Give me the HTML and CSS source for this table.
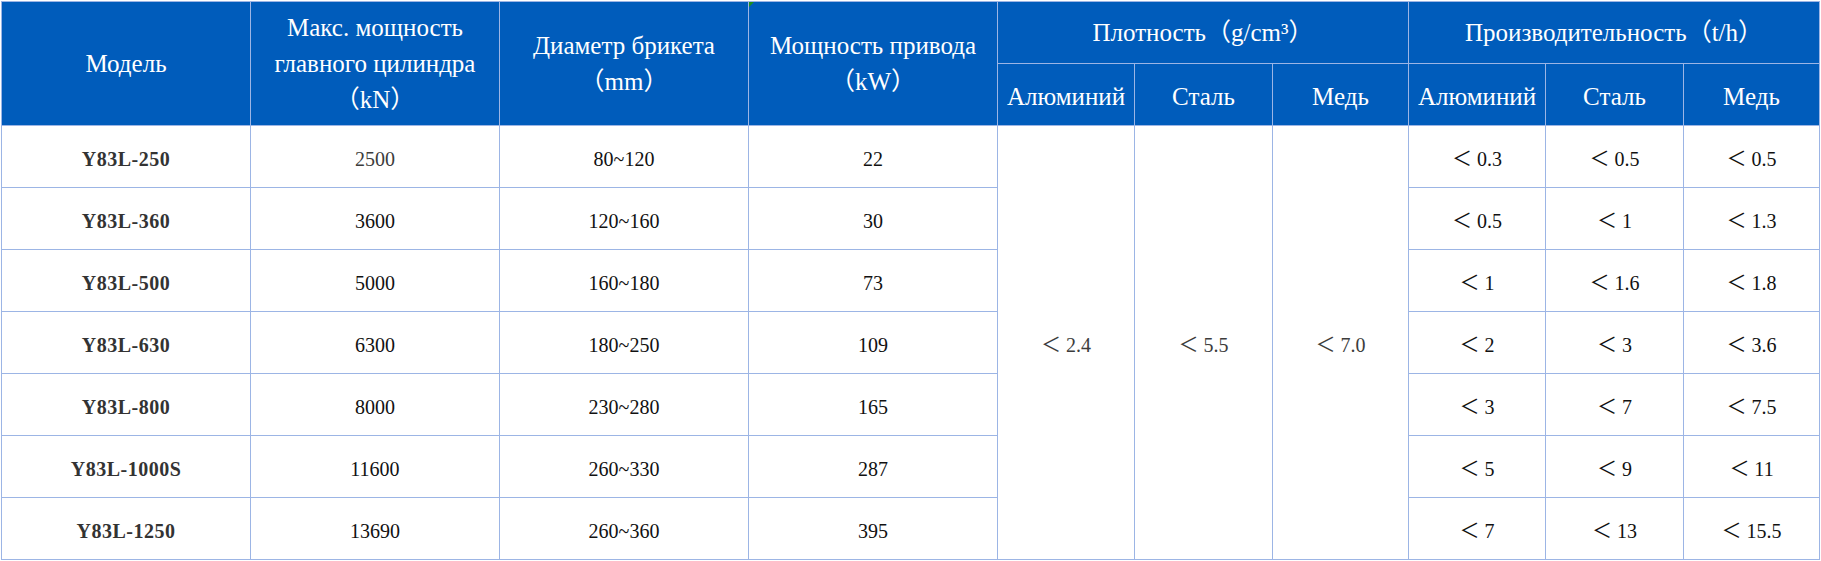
FILE: index.html
```html
<!DOCTYPE html>
<html lang="ru">
<head>
<meta charset="utf-8">
<title>Y83L</title>
<link rel="stylesheet" href="styles.css">
</head>
<body>
<table class="spec">
  <colgroup>
    <col class="c-wide"><col class="c-wide"><col class="c-wide"><col class="c-wide">
    <col class="c-137"><col class="c-138"><col class="c-136">
    <col class="c-137"><col class="c-138"><col class="c-136">
  </colgroup>
  <thead>
    <tr class="hrow">
      <th rowspan="2">Модель</th>
      <th rowspan="2">Макс. мощность<br>главного цилиндра<br>（kN）</th>
      <th rowspan="2">Диаметр брикета<br>（mm）</th>
      <th rowspan="2" class="flag">Мощность привода<br>（kW）</th>
      <th colspan="3">Плотность（g/cm³）</th>
      <th colspan="3">Производительность（t/h）</th>
    </tr>
    <tr class="hrow sub">
      <th>Алюминий</th><th>Сталь</th><th>Медь</th>
      <th>Алюминий</th><th>Сталь</th><th>Медь</th>
    </tr>
  </thead>
  <tbody>
    <tr>
      <td class="model">Y83L-250</td><td class="muted">2500</td><td>80~120</td><td>22</td>
      <td rowspan="7" class="muted">＜ 2.4</td><td rowspan="7" class="muted">＜ 5.5</td><td rowspan="7" class="muted">＜ 7.0</td>
      <td>＜ 0.3</td><td>＜ 0.5</td><td>＜ 0.5</td>
    </tr>
    <tr>
      <td class="model">Y83L-360</td><td>3600</td><td>120~160</td><td>30</td>
      <td>＜ 0.5</td><td>＜ 1</td><td>＜ 1.3</td>
    </tr>
    <tr>
      <td class="model">Y83L-500</td><td>5000</td><td>160~180</td><td>73</td>
      <td>＜ 1</td><td>＜ 1.6</td><td>＜ 1.8</td>
    </tr>
    <tr>
      <td class="model">Y83L-630</td><td>6300</td><td>180~250</td><td>109</td>
      <td>＜ 2</td><td>＜ 3</td><td>＜ 3.6</td>
    </tr>
    <tr>
      <td class="model">Y83L-800</td><td>8000</td><td>230~280</td><td>165</td>
      <td>＜ 3</td><td>＜ 7</td><td>＜ 7.5</td>
    </tr>
    <tr>
      <td class="model">Y83L-1000S</td><td>11600</td><td>260~330</td><td>287</td>
      <td>＜ 5</td><td>＜ 9</td><td>＜ 11</td>
    </tr>
    <tr>
      <td class="model">Y83L-1250</td><td>13690</td><td>260~360</td><td>395</td>
      <td>＜ 7</td><td>＜ 13</td><td>＜ 15.5</td>
    </tr>
  </tbody>
</table>
</body>
</html>
```

FILE: styles.css
```css
html, body {
  margin: 0;
  padding: 0;
  background: #ffffff;
}
body {
  padding: 1px 0 0 1px;
  font-family: "Liberation Serif", "Noto Sans CJK SC", serif;
}
.spec {
  border-collapse: collapse;
  table-layout: fixed;
  width: 1818px;
}
.c-wide { width: 249px; }
.c-136 { width: 136px; }
.c-137 { width: 137px; }
.c-138 { width: 138px; }

.spec tr { height: 62px; }

.spec th,
.spec td {
  border: 1px solid #9cb5e5;
  text-align: center;
  vertical-align: middle;
  padding: 0;
}
.spec th {
  background: #005cbb;
  color: #ffffff;
  font-weight: normal;
  font-size: 25px;
  line-height: 36px;
  position: relative;
}
.sub th { padding-top: 4px; }

.flag::before {
  content: "";
  position: absolute;
  left: 0;
  top: 0;
  border-top: 5px solid #1e8f1e;
  border-right: 5px solid transparent;
}

.spec td {
  font-size: 20px;
  line-height: 24px;
  color: #111111;
  padding-top: 4px;
}
.spec td.model {
  font-weight: bold;
  color: #333333;
  letter-spacing: 0.5px;
}
.spec td.muted {
  color: #3c3c3c;
}
```
